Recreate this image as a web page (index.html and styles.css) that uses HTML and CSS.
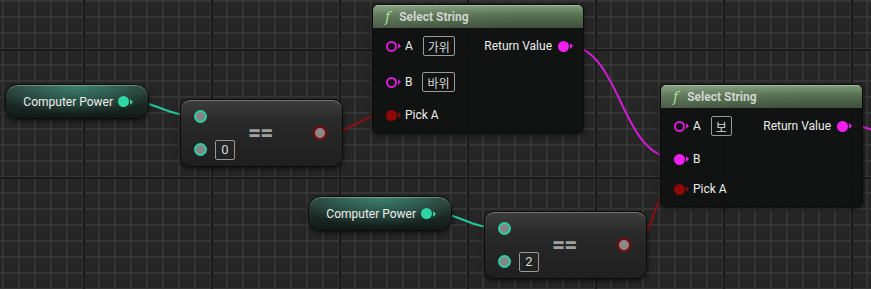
FILE: index.html
```html
<!DOCTYPE html>
<html lang="ko">
<head>
    <meta charset="UTF-8">
    <title>Blueprint</title>
    <link rel="stylesheet" href="styles.css">
</head>
<body>

<div class="graph">
    <svg class="wires" width="871" height="289" viewBox="0 0 871 289">
        <path class="wire float" d="M123,101 C160,101 163,116 200,116"/>
        <path class="wire bool" d="M322,133 C356,133 357,114 391,114"/>
        <path class="wire str" d="M562,44 C625,44 616,159 679,159"/>
        <path class="wire float" d="M427,213 C465,213 465,228 503,228"/>
        <path class="wire bool" d="M626,245 C660,245 646,188 679,188"/>
        <path class="wire str" d="M840,124 C868,124 880,134 900,146"/>
    </svg>

    <!-- getters -->
    <div class="node getter" style="left: 5px; top: 84px;">
        <span class="label">Computer Power</span>
        <span class="pin float-out"></span>
    </div>
    <div class="node getter" style="left: 308px; top: 196px;">
        <span class="label">Computer Power</span>
        <span class="pin float-out"></span>
    </div>

    <!-- equal nodes -->
    <div class="node pure" style="left: 180px; top: 99px;">
        <div class="pure-inputs">
            <div class="pure-row"><span class="pin float-in"></span></div>
            <div class="pure-row"><span class="pin float-in"></span><span class="box num">0</span></div>
        </div>
        <div class="op">==</div>
        <span class="pin bool-out"></span>
    </div>
    <div class="node pure" style="left: 484px; top: 211px;">
        <div class="pure-inputs">
            <div class="pure-row"><span class="pin float-in"></span></div>
            <div class="pure-row"><span class="pin float-in"></span><span class="box num">2</span></div>
        </div>
        <div class="op">==</div>
        <span class="pin bool-out"></span>
    </div>

    <!-- select string nodes -->
    <div class="node func" style="left: 372px; top: 4px; width: 212px;">
        <div class="func-head"><span class="fx">f</span>Select String</div>
        <div class="func-body">
            <div class="func-col">
                <div class="row tall"><span class="pin str-in"></span><span class="label">A</span><span class="box">가위</span></div>
                <div class="row tall"><span class="pin str-in"></span><span class="label">B</span><span class="box">바위</span></div>
                <div class="row"><span class="pin bool-in"></span><span class="label">Pick A</span></div>
            </div>
            <div class="func-col out">
                <div class="row tall"><span class="label">Return Value</span><span class="pin str-out"></span></div>
            </div>
        </div>
    </div>
    <div class="node func" style="left: 660px; top: 84px; width: 203px;">
        <div class="func-head"><span class="fx">f</span>Select String</div>
        <div class="func-body">
            <div class="func-col">
                <div class="row tall"><span class="pin str-in"></span><span class="label">A</span><span class="box">보</span></div>
                <div class="row"><span class="pin str-out"></span><span class="label">B</span></div>
                <div class="row"><span class="pin bool-in"></span><span class="label">Pick A</span></div>
            </div>
            <div class="func-col out">
                <div class="row tall"><span class="label">Return Value</span><span class="pin str-out"></span></div>
            </div>
        </div>
    </div>
</div>

</body>
</html>
```

FILE: styles.css
```css
body {
    margin: 0;
    font-family: Roboto, "Noto Sans CJK KR", sans-serif;
    font-size: 12px;
    color: #ececec;
    background: #262626;
}

.graph {
    position: relative;
    width: 871px;
    height: 289px;
    overflow: hidden;
    background-color: #262626;
    background-image:
        linear-gradient(90deg, #1b1b1b 2px, transparent 2px),
        linear-gradient(#1b1b1b 2px, transparent 2px),
        linear-gradient(90deg, #353535 2px, transparent 2px),
        linear-gradient(#353535 2px, transparent 2px);
    background-size: 128px 128px, 128px 128px, 16px 16px, 16px 16px;
    background-position: 83px 0, 0 49px, 2px 0, 0 0;
}

.wires {
    position: absolute;
    left: 0;
    top: 0;
    z-index: 1;
}

.wire {
    fill: none;
    stroke-width: 2;
}

.wire.float { stroke: #22c79c; }
.wire.bool { stroke: #8c1010; }
.wire.str { stroke: #d41bd4; }

.node {
    position: absolute;
    z-index: 2;
    box-sizing: border-box;
    border: 1px solid #0b0b0b;
    box-shadow: 0 2px 5px rgba(0, 0, 0, 0.6);
}

/* getter */
.getter {
    width: 144px;
    height: 35px;
    border-radius: 13px;
    display: flex;
    align-items: center;
    justify-content: flex-end;
    gap: 5px;
    padding-right: 19px;
    background:
        radial-gradient(ellipse 60% 90% at 50% 0, rgba(70, 175, 145, 0.6), transparent),
        linear-gradient(#2c3e38, #111a17);
    box-shadow: inset 0 1px 0 rgba(255, 255, 255, 0.3), 0 2px 5px rgba(0, 0, 0, 0.6);
}

/* pure ops */
.pure {
    width: 163px;
    height: 68px;
    border-radius: 10px;
    display: flex;
    align-items: center;
    padding: 0 15px 0 13px;
    background: linear-gradient(#3e3e3e, #2a2a2a 30%, #1f1f1f);
    box-shadow: inset 0 1px 0 rgba(255, 255, 255, 0.28), 0 2px 5px rgba(0, 0, 0, 0.6);
}

.pure-inputs {
    display: flex;
    flex-direction: column;
    gap: 12px;
    width: 54px;
}

.pure-row {
    display: flex;
    align-items: center;
    gap: 8px;
    height: 21px;
}

.op {
    flex: 1;
    color: #a0a0a0;
    font-size: 23px;
    font-weight: bold;
    letter-spacing: -1px;
    line-height: 1;
}

/* function nodes */
.func {
    border-radius: 6px;
    background: rgba(16, 18, 17, 0.95);
    overflow: hidden;
}

.func-head {
    height: 23px;
    display: flex;
    align-items: center;
    padding-left: 12px;
    font-weight: bold;
    color: #cfd6cf;
    background:
        linear-gradient(90deg, rgba(255, 255, 255, 0.08), transparent 70%),
        linear-gradient(#7f9e7c, #56704f 45%, #3d4f3b);
    box-shadow: inset 0 1px 0 rgba(255, 255, 255, 0.3);
}

.fx {
    font-family: "DejaVu Serif", serif;
    font-style: italic;
    font-weight: normal;
    font-size: 14px;
    color: #a8e09a;
    margin-right: 9px;
}

.func-body {
    display: flex;
    justify-content: space-between;
    padding: 6px 14px 8px 13px;
}

.func-col {
    display: flex;
    flex-direction: column;
    gap: 12px;
}

.row {
    display: flex;
    align-items: center;
    gap: 8px;
    height: 18px;
}

.row.tall {
    height: 24px;
}

.out .row {
    gap: 6px;
}

.box {
    box-sizing: border-box;
    height: 20px;
    min-width: 20px;
    padding: 0 4px;
    margin-left: 2px;
    border: 1px solid #9a9a9a;
    border-radius: 2px;
    display: flex;
    align-items: center;
    justify-content: center;
    color: #d8d8d8;
    font-size: 12px;
}

.box.num {
    margin-left: 0;
    font-size: 13px;
}

/* pins */
.pin {
    position: relative;
    box-sizing: border-box;
    flex: none;
    width: 11px;
    height: 11px;
    border-radius: 50%;
}

.float-out {
    background: #2fd6a3;
}

.float-in {
    width: 13px;
    height: 13px;
    border: 2px solid #2bd09e;
    background: #858585;
}

.bool-out {
    width: 14px;
    height: 14px;
    border: 2px solid #7d0b0b;
    background: #8a8a8a;
}

.str-in {
    border: 2px solid #d61ed6;
    background: #141414;
}

.str-out {
    background: #f01ef0;
}

.bool-in {
    background: #8e0808;
}

.float-out::after,
.str-in::after,
.str-out::after,
.bool-in::after {
    content: "";
    position: absolute;
    top: 50%;
    right: -4px;
    margin-top: -3px;
    border-left: 3px solid #2fd6a3;
    border-top: 3px solid transparent;
    border-bottom: 3px solid transparent;
}

.str-in::after {
    right: -6px;
    border-left-color: #d61ed6;
}

.str-out::after {
    border-left-color: #f01ef0;
}

.bool-in::after {
    border-left-color: #8e0808;
}
```
